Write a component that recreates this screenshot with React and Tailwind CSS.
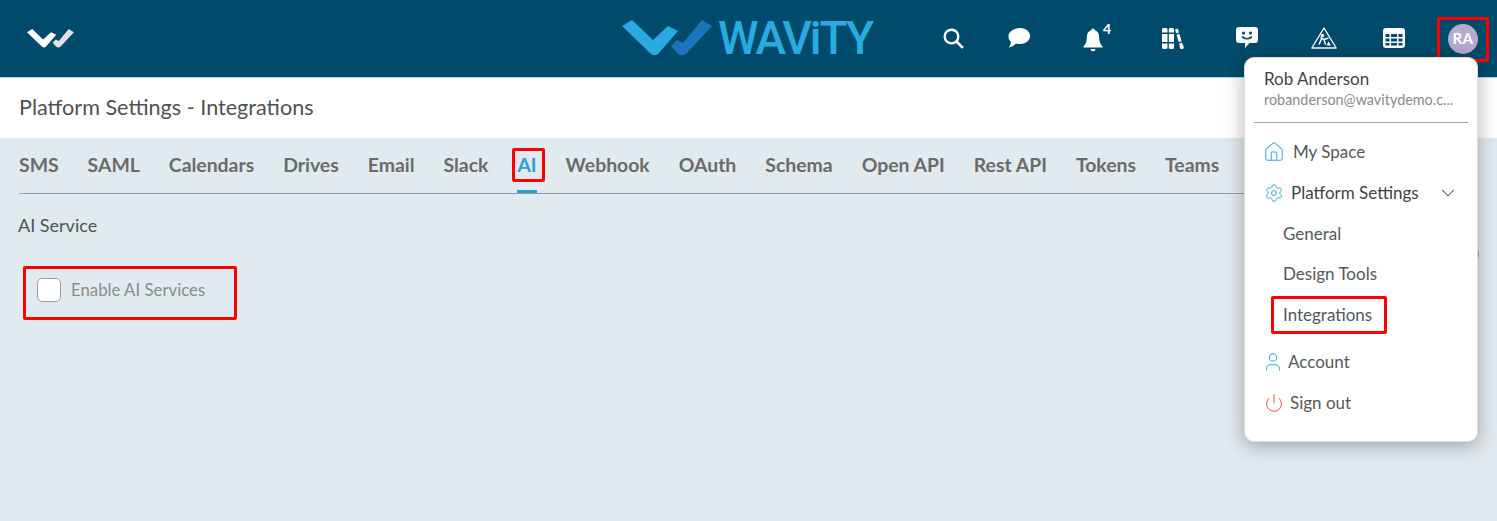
import React from "react";
import { House, Settings, ChevronDown, User, Power } from "lucide-react";

const tabs = ["SMS","SAML","Calendars","Drives","Email","Slack","AI","Webhook","OAuth","Schema","Open API","Rest API","Tokens","Teams"];

function Mark({ a, b, className }) {
  return (
    <svg viewBox="0 0 92 36" className={className} fill="none">
      <path d="M0 6 L10 0 L31 20 L46 6 L56 11 L36 34 Q33 36.500 29 34 Z" fill={a} />
      <path d="M49 26 L55 20 L61 23 L80 0 L90 6 L65 33 Q60 37 56 34 Z" fill={b} />
    </svg>
  );
}

function RedBox({ className }) {
  return <div className={"absolute border-[3px] border-[#ff0000] rounded-[2px] pointer-events-none " + className} />;
}

function Row({ icon, label, className = "" }) {
  return (
    <div className={"flex items-center text-[17px] leading-[24px] text-[#55585a] " + className}>
      {icon}
      <span>{label}</span>
    </div>
  );
}

export default function App() {
  return (
    <div className="relative w-[1497px] h-[521px] overflow-hidden bg-[#e1eaef] font-['Lato','Liberation_Sans',sans-serif]">
      <header className="h-[78px] bg-[#004b6b] border-b border-b-[#a6dcec] flex items-center">
        <Mark a="#ffffff" b="#e0e0e0" className="ml-[27px] w-[48px] h-[19px] -mt-[1px]" />
        <div className="ml-[547px] flex items-center -mt-[1px]">
          <Mark a="#29abe2" b="#1b75bc" className="w-[92px] h-[36px]" />
          <span className="ml-[4px] w-[157px] whitespace-nowrap font-['Roboto',sans-serif] font-medium text-[46px] leading-[46px] text-[#29abe2] tracking-[-2px]">WAViTY</span>
        </div>
        <svg viewBox="0 0 21 21" className="ml-[68px] w-[21px] h-[21px] -mt-[1px]" fill="none" stroke="#fff">
          <circle cx="8.500" cy="8.500" r="6.800" strokeWidth="2.400" />
          <path d="M13.500 13.500L19.800 19.800" strokeWidth="2.600" />
        </svg>
        <svg viewBox="0 0 22 20" className="ml-[44px] w-[22px] h-[20px] -mt-[1px]" fill="#fff">
          <path d="M12 0C17.500 0 22 3.400 22 8S17.500 16 12 16C10.500 16 9.400 15.800 8 15.400C6 17.800 3 19 0.500 19.500C2.200 17.800 3 16 2.600 13.500C0.900 12 0.500 10 0.500 8C0.500 3.400 6 0 12 0Z" />
        </svg>
        <div className="relative ml-[53px] w-[20px] h-[24px] mt-[2px]">
          <svg viewBox="0 0 20 24" className="w-[20px] h-[24px]" fill="#fff">
            <path d="M10 0.500C11 0.500 11.600 1.200 11.600 2.300C14.800 3 16.200 6 16.200 9.500C16.200 13.500 17 16 19.500 18.500V19.500H0.500V18.500C3 16 3.800 13.500 3.800 9.500C3.800 6 5.200 3 8.400 2.300C8.400 1.200 9 0.500 10 0.500Z" />
            <path d="M7.500 21H12.500C12.300 22.400 11.300 23.300 10 23.300S7.700 22.400 7.500 21Z" />
          </svg>
          <span className="absolute left-[20px] -top-[6px] text-[14px] leading-[14px] font-bold text-white">4</span>
        </div>
        <svg viewBox="0 0 22 21" className="ml-[59px] w-[22px] h-[21px] -mt-[1px]" fill="#fff">
          <path d="M0 1.500Q0 0 1.500 0H4Q5.500 0 5.500 1.500V4.500H0ZM0 6H5.500V14H0ZM0 15.500H5.500V19.500Q5.500 21 4 21H1.500Q0 21 0 19.500ZM6.800 1.500Q6.800 0 8.300 0H10.500Q12 0 12 1.500V4.500H6.800ZM6.800 6H12V14H6.800ZM6.800 15.500H12V19.500Q12 21 10.500 21H8.300Q6.800 21 6.800 19.500ZM13 1.500L15.800 0.500L17 4.500L14.200 5.500ZM14.600 6.800L17.400 5.900L19.600 13.200L16.800 14.100ZM17.200 15.500L20 14.600L21.800 19.300Q22.200 20.400 21 20.800L19.500 21.200Q18.500 21.400 18.100 20.300Z" />
        </svg>
        <svg viewBox="0 0 22 22" className="ml-[52px] w-[22px] h-[22px] -mt-[1px]" fill="#fff">
          <path d="M3 0H19Q22 0 22 3V13Q22 16 19 16H13.500L9 21V16H3Q0 16 0 13V3Q0 0 3 0Z" />
          <circle cx="7.500" cy="6" r="1.600" fill="#004b6b" />
          <circle cx="14.500" cy="6" r="1.600" fill="#004b6b" />
          <path d="M6.500 10Q11 13.500 15.500 10" stroke="#004b6b" strokeWidth="1.600" fill="none" strokeLinecap="round" />
        </svg>
        <svg viewBox="0 0 26 22" className="ml-[53px] w-[26px] h-[22px] -mt-[1px]" fill="none">
          <path d="M13 1L25.200 21H0.800Z" stroke="#fff" strokeWidth="1.300" strokeLinejoin="round" />
          <circle cx="11.500" cy="8.500" r="1.700" fill="#fff" />
          <path d="M9.500 10.500L13 12.500L14.500 17.500M10.500 12L8 17.500M13 12.500L17.500 11" stroke="#fff" strokeWidth="1.500" />
          <path d="M15.500 18.500L20 18.500L17.500 14.500Z" fill="#fff" />
        </svg>
        <svg viewBox="0 0 22 20" className="ml-[46px] w-[22px] h-[20px] -mt-[2px]" fill="#fff">
          <path fillRule="evenodd" d="M3 0H19Q22 0 22 3V17Q22 20 19 20H3Q0 20 0 17V3Q0 0 3 0ZM2.500 6V9H6.500V6ZM8 6V9H14V6ZM15.500 6V9H19.500V6ZM2.500 10.500V13.500H6.500V10.500ZM8 10.500V13.500H14V10.500ZM15.500 10.500V13.500H19.500V10.500ZM2.500 15V17.500H6.500V15ZM8 15V17.500H14V15ZM15.500 15V17.500H19.500V15Z" />
        </svg>
        <div className="ml-[43px] w-[30px] h-[30px] rounded-full bg-[#b8a9cf] flex items-center justify-center text-white text-[15px] font-bold tracking-[0.5px]">RA</div>
      </header>

      <div className="h-[60px] bg-white flex items-center pl-[19px] pb-[1px] text-[21.6px] text-[#4f5254]">Platform Settings - Integrations</div>

      <nav className="mx-[19px] h-[56px] border-b border-b-[#9a9ea1] flex gap-[29px] pt-[14px]">
        {tabs.map((t) => (
          <div key={t} className={"relative text-[19.4px] leading-[26px] font-bold " + (t === "AI" ? "text-[#2f9fcf]" : "text-[#6b6b6b]")}>
            {t}
            {t === "AI" && <div className="absolute left-0 right-0 top-[38px] h-[3px] bg-[#2f9fcf]" />}
          </div>
        ))}
      </nav>

      <div className="pl-[18px] pt-[19px] text-[18px] leading-[24px] text-[#4f5254]">AI Service</div>

      <div className="mt-[41px] ml-[37px] flex items-center">
        <div className="w-[24px] h-[24px] rounded-[5px] bg-white border border-[#9c9c9c]" />
        <span className="ml-[10px] text-[16.8px] leading-[24px] text-[#8b8b8b]">Enable AI Services</span>
      </div>

      <RedBox className="left-[1437px] top-[17px] w-[52px] h-[45px]" />
      <RedBox className="left-[512px] top-[148px] w-[33px] h-[34px]" />
      <RedBox className="left-[23px] top-[266px] w-[214px] h-[54px]" />

      <div className="absolute left-[1466px] top-[247px] w-[13px] h-[14px] rounded-full bg-[#e8853f]" />

      <div className="absolute left-[1244px] top-[57px] w-[234px] h-[385px] bg-white rounded-[10px] border border-[#dcdcdc] shadow-[0_4px_20px_rgba(0,0,0,0.3)] flex flex-col">
        <div className="mx-[9px] pl-[10px] pt-[9px] h-[65px] border-b border-b-[#a5a5a5]">
          <div className="text-[17px] leading-[24px] text-[#3f4244]">Rob Anderson</div>
          <div className="text-[14.4px] leading-[18px] text-[#8b8b8b]">robanderson@wavitydemo.c...</div>
        </div>
        <Row className="mt-[17px] ml-[18px]" icon={<House size={22} strokeWidth={1.1} color="#3fa9dc" className="mr-[8px]" />} label="My Space" />
        <div className="mt-[17px] ml-[19px] mr-[18px] flex items-center justify-between">
          <Row className="!text-[#3f4244]" icon={<Settings size={20} strokeWidth={1.2} color="#3fa9dc" className="mr-[7px]" />} label="Platform Settings" />
          <ChevronDown size={22} strokeWidth={1.1} color="#3f4244" />
        </div>
        <Row className="mt-[17px] ml-[38px]" label="General" />
        <Row className="mt-[16px] ml-[38px]" label="Design Tools" />
        <Row className="mt-[17px] ml-[38px]" label="Integrations" />
        <Row className="mt-[23px] ml-[17px]" icon={<User size={22} strokeWidth={1.1} color="#3fa9dc" className="mr-[4px]" />} label="Account" />
        <Row className="mt-[17px] ml-[19px]" icon={<Power size={20} strokeWidth={1.2} color="#e8533f" className="mr-[6px]" />} label="Sign out" />
      </div>
      <RedBox className="left-[1271px] top-[296px] w-[116px] h-[38px]" />
    </div>
  );
}
